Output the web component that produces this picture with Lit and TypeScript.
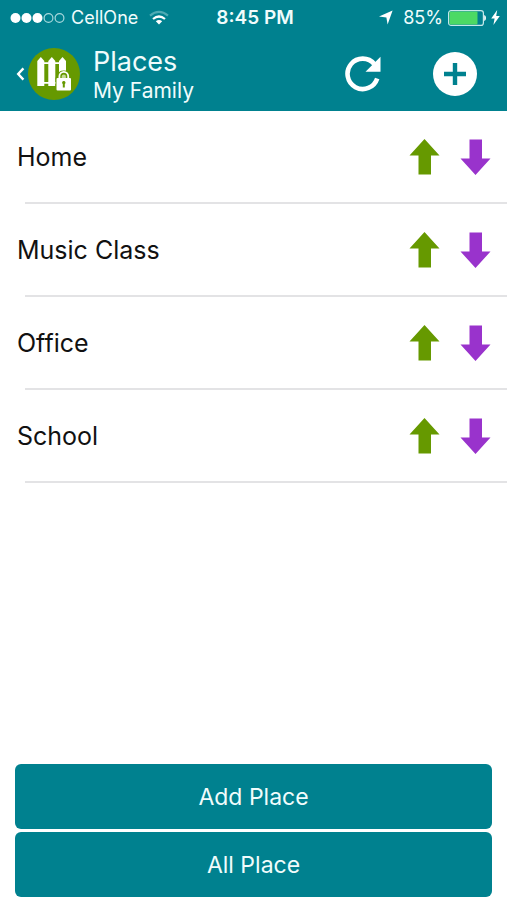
import { LitElement, html, css } from "lit";
import { customElement, state } from "lit/decorators.js";

@customElement("status-bar")
class StatusBar extends LitElement {
  static styles = css`
    :host {
      display: grid;
      grid-template-columns: 1fr auto 1fr;
      align-items: center;
      height: 35px;
      padding: 0 7px 0 10px;
      font-size: 18px;
      line-height: 24px;
      color: #f0fcfc;
    }
    .group {
      display: flex;
      align-items: center;
    }
    .end {
      justify-content: flex-end;
    }
    .time {
      font-size: 19px;
      font-weight: 600;
    }
    .dots {
      margin-right: 6px;
    }
    .wifi {
      margin-left: 11px;
    }
    .location {
      margin-right: 10px;
    }
    .battery {
      margin: 0 5px 0 5px;
    }
    svg {
      display: block;
    }
  `;

  render() {
    return html`
      <div class="group">
        <svg class="dots" width="55" height="12" viewBox="0 0 55 12" aria-hidden="true">
          <g fill="#fff">
            <circle cx="5.5" cy="6" r="5" />
            <circle cx="16.5" cy="6" r="5" />
            <circle cx="27.5" cy="6" r="5" />
          </g>
          <g fill="none" stroke="#a6d8dc" stroke-width="1.2">
            <circle cx="38.5" cy="6" r="4.4" />
            <circle cx="49.5" cy="6" r="4.4" />
          </g>
        </svg>
        <span>CellOne</span>
        <svg class="wifi" width="20" height="16" viewBox="0 0 20 16" aria-hidden="true">
          <g fill="none" stroke-width="2.2">
            <path d="M1 5.6Q10-1.800 19 5.6" stroke="#4fabb4" />
            <path d="M4 9Q10 4 16 9" stroke="#fff" />
          </g>
          <path d="M6.800 11.2Q10 8.600 13.200 11.2L10 14.600z" fill="#fff" />
        </svg>
      </div>
      <span class="time">8:45 PM</span>
      <div class="group end">
        <svg class="location" width="14" height="15" viewBox="0 0 14 15" aria-hidden="true">
          <path d="M13.6.4 8.6 14.4 7.4 7.4 0 6.6z" fill="#fff" />
        </svg>
        <span>85%</span>
        <svg class="battery" width="38" height="16" viewBox="0 0 38 16" aria-hidden="true">
          <rect x=".6" y=".6" width="34.8" height="14.8" rx="2.5" fill="none" stroke="#c5e8ea" stroke-width="1.2" />
          <rect x="1.500" y="1.500" width="28" height="13" rx="1" fill="#4cd964" />
          <path d="M36.200 5v6q1.800-.6 1.800-3t-1.800-3z" fill="#fff" />
        </svg>
        <svg width="9" height="15" viewBox="0 0 9 15" aria-hidden="true">
          <path d="M6.2 0 .2 8.4H3.600L2.4 15 8.800 6H5.2z" fill="#fff" />
        </svg>
      </div>
    `;
  }
}

@customElement("place-row")
class PlaceRow extends LitElement {
  static properties = { name: { type: String } };
  declare name: string;

  static styles = css`
    :host {
      display: flex;
      align-items: center;
      box-sizing: border-box;
      height: 93px;
      padding: 1px 16px 2px 17px;
      background: linear-gradient(#e3e3e5, #e3e3e5) 25px 100% / 100% 2px no-repeat;
    }
    .name {
      flex: 1;
      font-size: 25px;
      line-height: 32px;
      color: #111;
    }
    .moves {
      display: flex;
      gap: 20px;
    }
    button {
      display: block;
      padding: 0;
      border: 0;
      background: none;
      cursor: pointer;
    }
    svg {
      display: block;
    }
  `;

  private move(step: number) {
    this.dispatchEvent(new CustomEvent("move", { detail: step }));
  }

  render() {
    return html`
      <span class="name">${this.name}</span>
      <div class="moves">
        <button aria-label="Move ${this.name} up" @click=${() => this.move(-1)}>
          <svg width="31" height="36" viewBox="0 0 31 36">
            <path d="M15.5 0 30.500 16.5H22V35.500H9.500V16.5H.5z" fill="#669900" />
          </svg>
        </button>
        <button aria-label="Move ${this.name} down" @click=${() => this.move(1)}>
          <svg width="31" height="36" viewBox="0 0 31 36">
            <path d="M15.5 36 30.500 19.5H22V.5H9.500V19.5H.5z" fill="#9933cc" />
          </svg>
        </button>
      </div>
    `;
  }
}

@customElement("app-root")
class AppRoot extends LitElement {
  @state() private places = ["Home", "Music Class", "Office", "School"];

  static styles = css`
    :host {
      display: flex;
      flex-direction: column;
      box-sizing: border-box;
      min-height: 100vh;
      background: #fff;
      font-family: Inter, "Liberation Sans", sans-serif;
    }
    .top {
      background: #00818f;
      color: #f0fcfc;
    }
    .bar {
      display: flex;
      align-items: center;
      box-sizing: border-box;
      height: 76px;
      padding: 2px 30px 0 16px;
    }
    button {
      padding: 0;
      border: 0;
      background: none;
      color: inherit;
      font: inherit;
      cursor: pointer;
    }
    .back {
      display: flex;
      align-items: center;
      gap: 3px;
    }
    .titles {
      flex: 1;
      margin-left: 13px;
      padding-top: 2px;
    }
    h1,
    p {
      margin: 0;
      font-weight: 400;
    }
    h1 {
      font-size: 27px;
      line-height: 32px;
    }
    p {
      font-size: 21px;
      line-height: 26px;
    }
    .tools {
      display: flex;
      align-items: center;
      gap: 52px;
    }
    svg {
      display: block;
    }
    .list {
      flex: 1;
      margin: 0;
      padding: 0;
      list-style: none;
    }
    .actions {
      display: grid;
      gap: 3px;
      padding: 15px 15px 3px;
    }
    .action {
      height: 65px;
      border-radius: 6px;
      background: #00818f;
      color: #f0fcfc;
      font-size: 23px;
      line-height: 28px;
    }
  `;

  private move(index: number, step: number) {
    const target = index + step;
    if (target < 0 || target >= this.places.length) return;
    const next = [...this.places];
    [next[index], next[target]] = [next[target], next[index]];
    this.places = next;
  }

  render() {
    return html`
      <header class="top">
        <status-bar></status-bar>
        <div class="bar">
          <button class="back" aria-label="Back">
            <svg width="9" height="14" viewBox="0 0 9 14">
              <path d="M7.4 1.4 2.2 7l5.2 5.6" fill="none" stroke="#fff" stroke-width="2.4" />
            </svg>
            <svg width="52" height="52" viewBox="0 0 52 52">
              <circle cx="26" cy="26" r="26" fill="#669900" />
              <g fill="#fff">
                <path d="M9.3 13 12.8 9l3.500 4V38h-7z" />
                <path d="M20.300 13 23.800 9l3.500 4V38h-7z" />
                <path d="M31 13 34.500 9l3.500 4V38h-7z" />
                <path d="M10 14.300h27v1.700H10zM10 34h27v1.700H10z" />
              </g>
              <path d="M27.500 44V29.500h2V28q0-5.500 6.500-5.500t6.500 5.500v1.500h2V44z" fill="#669900" />
              <rect x="28.500" y="30" width="14.500" height="12.500" rx="1" fill="#fff" />
              <path d="M31.400 30v-1.800a4.400 4.400 0 0 1 8.800 0V30" fill="none" stroke="#fff" stroke-width="1.800" />
              <path d="M33.700 30v-1.500a2.100 2.100 0 0 1 4.200 0V30z" fill="#c4da96" />
              <path d="M35.800 33a1.700 1.700 0 0 1 1 3.100v3.400h-2v-3.400a1.700 1.700 0 0 1 1-3.100z" fill="#669900" />
            </svg>
          </button>
          <div class="titles">
            <h1>Places</h1>
            <p>My Family</p>
          </div>
          <div class="tools">
            <button aria-label="Refresh">
              <svg width="36" height="36" viewBox="0 0 36 36">
                <path d="M32.200 22.500A15.200 15.200 0 1 1 29.500 8.200" fill="none" stroke="#fff" stroke-width="4.600" />
                <path d="M35.500.8V15.800H20.500z" fill="#fff" />
              </svg>
            </button>
            <button aria-label="Add">
              <svg width="44" height="44" viewBox="0 0 44 44">
                <circle cx="22" cy="22" r="22" fill="#fff" />
                <path d="M22 11v22M11 22h22" stroke="#00818f" stroke-width="4.400" />
              </svg>
            </button>
          </div>
        </div>
      </header>
      <ul class="list">
        ${this.places.map(
          (name, i) => html`
            <li><place-row .name=${name} @move=${(e: CustomEvent<number>) => this.move(i, e.detail)}></place-row></li>
          `
        )}
      </ul>
      <div class="actions">
        <button class="action">Add Place</button>
        <button class="action">All Place</button>
      </div>
    `;
  }
}
